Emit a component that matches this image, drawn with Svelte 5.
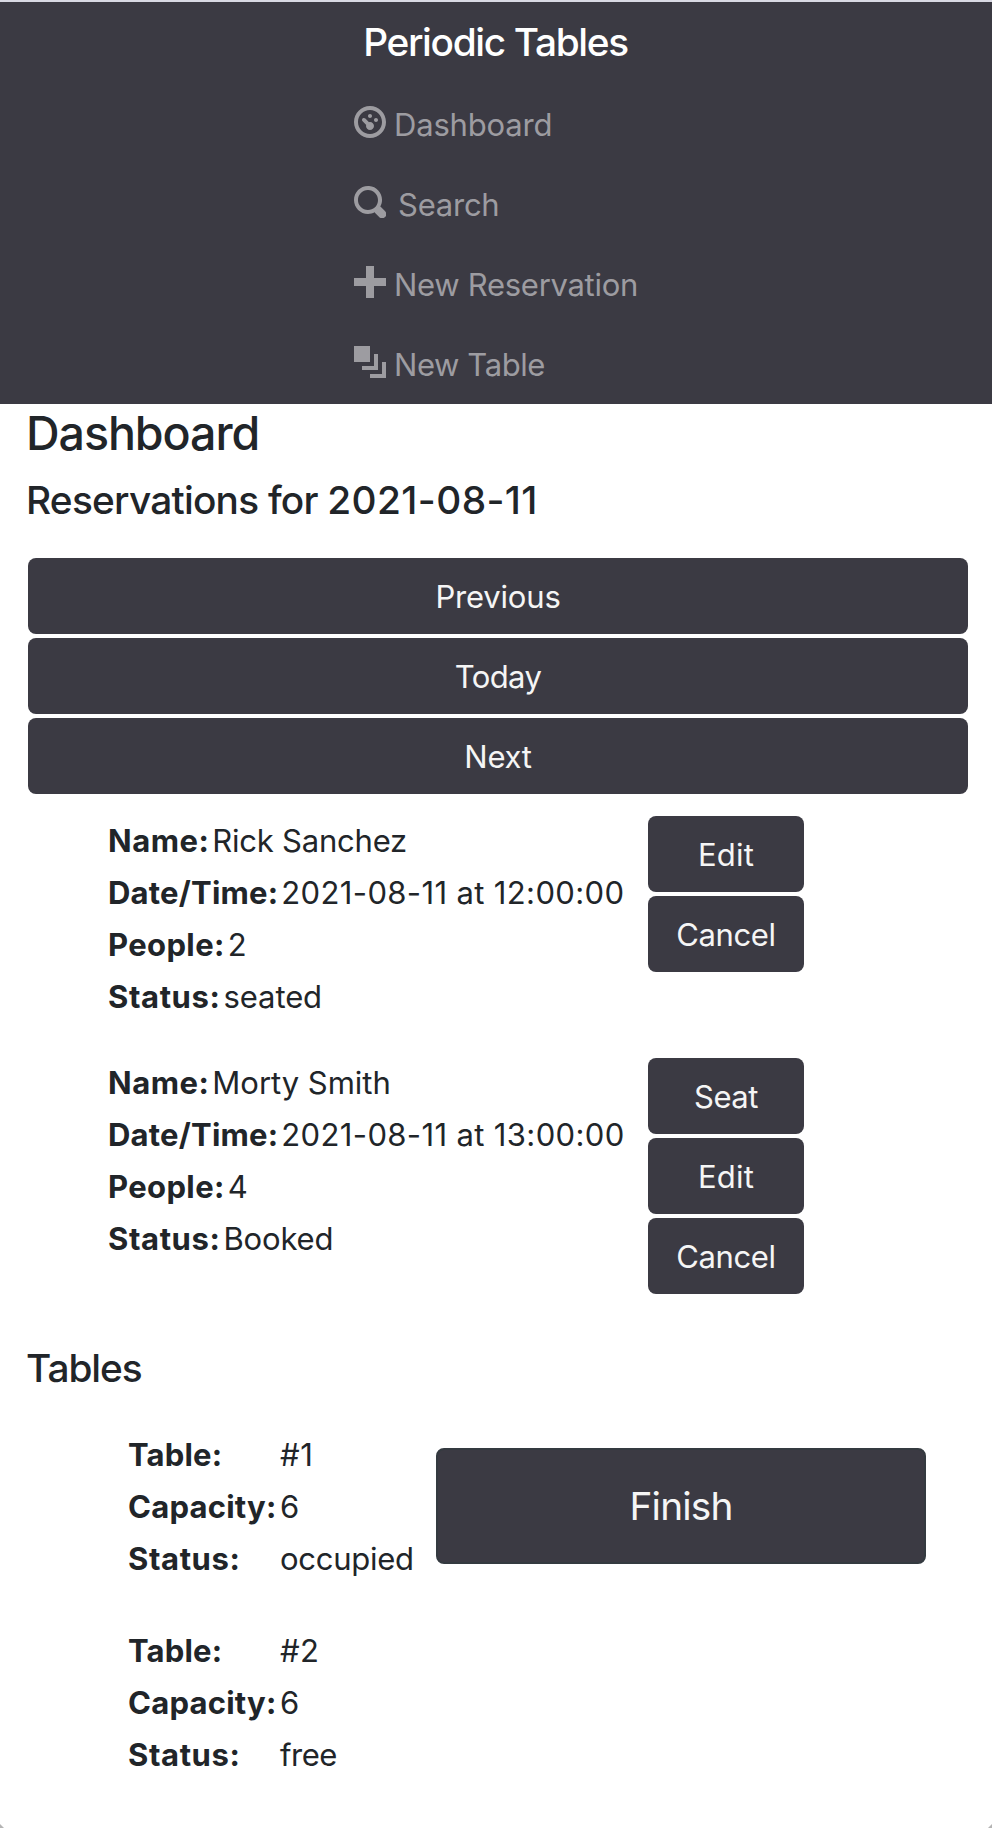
<script>
  const links = [
    { label: 'Dashboard', track: -0.2, icon: 'M4 0c-2.2 0-4 1.8-4 4s1.8 4 4 4 4-1.8 4-4-1.8-4-4-4zm0 1c1.66 0 3 1.34 3 3s-1.34 3-3 3-3-1.34-3-3 1.34-3 3-3zm0 1c-.28 0-.5.22-.5.5s.22.5.5.5.5-.22.5-.5-.22-.5-.5-.5zm-1.66 1a.5.5 0 0 0-.19.84l.91.91c-.02.08-.06.16-.06.25 0 .55.45 1 1 1s1-.45 1-1-.45-1-1-1c-.09 0-.17.04-.25.06l-.91-.91a.5.5 0 0 0-.44-.16.5.5 0 0 0-.06 0zm3.16 0c-.28 0-.5.22-.5.5s.22.5.5.5.5-.22.5-.5-.22-.5-.5-.5z' },
    { label: 'Search', track: -0.25, wide: true, icon: 'M3.5 0c-1.93 0-3.5 1.57-3.5 3.5s1.57 3.5 3.5 3.5c.59 0 1.17-.14 1.66-.41a1 1 0 0 0 .13.13l1 1a1.02 1.02 0 1 0 1.44-1.44l-1-1a1 1 0 0 0-.16-.13c.27-.49.44-1.06.44-1.66 0-1.93-1.55-3.5-3.5-3.5zm0 1c1.39 0 2.5 1.11 2.5 2.5 0 .66-.24 1.27-.66 1.72-.01.01-.02.02-.03.03a1 1 0 0 0-.13.13c-.44.4-1.04.63-1.69.63-1.39 0-2.5-1.11-2.5-2.5s1.11-2.5 2.5-2.5z' },
    { label: 'New Reservation', track: -0.31, icon: 'M3 0v3h-3v2h3v3h2v-3h3v-2h-3v-3h-2z' },
    { label: 'New Table', track: -0.43, icon: 'M0 0v4h4v-4h-4zm5 2v3h-3v1h4v-4h-1zm2 2v3h-3v1h4v-4h-1z' }
  ];

  const days = [
    { label: 'Previous', track: -0.2 },
    { label: 'Today', track: -0.6 },
    { label: 'Next', track: -0.27 }
  ];

  const seat = { label: 'Seat', track: -0.45 };
  const edit = { label: 'Edit', track: 0.2 };
  const cancel = { label: 'Cancel', track: -0.4 };

  const reservations = [
    {
      fields: [
        { label: 'Name:', lt: 0.5, value: 'Rick Sanchez', vt: -0.24 },
        { label: 'Date/Time:', lt: 0.2, value: '2021-08-11 at 12:00:00', vt: 0.35 },
        { label: 'People:', lt: 0.36, value: '2', vt: 0 },
        { label: 'Status:', lt: 0.6, value: 'seated', vt: -0.1 }
      ],
      actions: [edit, cancel]
    },
    {
      fields: [
        { label: 'Name:', lt: 0.5, value: 'Morty Smith', vt: -0.04 },
        { label: 'Date/Time:', lt: 0.2, value: '2021-08-11 at 13:00:00', vt: 0.35 },
        { label: 'People:', lt: 0.36, value: '4', vt: 0 },
        { label: 'Status:', lt: 0.6, value: 'Booked', vt: -0.19 }
      ],
      actions: [seat, edit, cancel]
    }
  ];

  const tables = [
    {
      fields: [
        { label: 'Table:', lt: 0.16, value: '#1', vt: 0.6 },
        { label: 'Capacity:', lt: 0.22, value: '6', vt: 0 },
        { label: 'Status:', lt: 0.6, value: 'occupied', vt: -0.3 }
      ],
      occupied: true
    },
    {
      fields: [
        { label: 'Table:', lt: 0.16, value: '#2', vt: 0.4 },
        { label: 'Capacity:', lt: 0.22, value: '6', vt: 0 },
        { label: 'Status:', lt: 0.6, value: 'free', vt: -0.5 }
      ],
      occupied: false
    }
  ];
</script>

<div class="page">
  <nav class="navbar">
    <div class="brand">Periodic Tables</div>
    <ul class="links">
      {#each links as link}
        <li class="link" class:wide={link.wide}>
          <svg viewBox="0 0 8 8" aria-hidden="true"><path d={link.icon} /></svg>
          <span style="letter-spacing: {link.track}px">{link.label}</span>
        </li>
      {/each}
    </ul>
  </nav>

  <main>
    <h1>Dashboard</h1>
    <h2 class="date">Reservations for <time>2021-08-11</time></h2>

    <div class="days">
      {#each days as day}
        <button class="btn" style="letter-spacing: {day.track}px">{day.label}</button>
      {/each}
    </div>

    <div class="reservations">
      {#each reservations as reservation}
        <section class="reservation">
          <div class="details">
            {#each reservation.fields as field}
              <div class="field">
                <b style="letter-spacing: {field.lt}px">{field.label}</b>
                <span style="letter-spacing: {field.vt}px">{field.value}</span>
              </div>
            {/each}
          </div>
          <div class="actions">
            {#each reservation.actions as action}
              <button class="btn" style="letter-spacing: {action.track}px">{action.label}</button>
            {/each}
          </div>
        </section>
      {/each}
    </div>

    <h2 class="tables-title">Tables</h2>

    <div class="tables">
      {#each tables as table}
        <section class="table">
          <div class="grid">
            {#each table.fields as field}
              <b style="letter-spacing: {field.lt}px">{field.label}</b>
              <span style="letter-spacing: {field.vt}px">{field.value}</span>
            {/each}
          </div>
          {#if table.occupied}
            <button class="btn finish">Finish</button>
          {/if}
        </section>
      {/each}
    </div>
  </main>
  <i class="corner left"></i>
  <i class="corner right"></i>
</div>

<style>
  :global(body) {
    background: #fff;
  }

  .page {
    position: relative;
    box-sizing: border-box;
    height: 1828px;
    overflow: hidden;
    border-top: 2px solid #d9d9e3;
    color: #212529;
    font: 400 31.04px/52px Inter, 'Noto Sans', sans-serif;
    white-space: nowrap;
  }

  .navbar {
    display: flex;
    flex-direction: column;
    align-items: center;
    height: 402px;
    background: #3b3a43;
  }

  .brand {
    height: 82px;
    margin-right: 1px;
    color: #fff;
    font-size: 38.8px;
    font-weight: 450;
    line-height: 80px;
    letter-spacing: -1.33px;
  }

  .links {
    width: 284px;
    margin: 0;
    padding: 0;
    list-style: none;
  }

  .link {
    display: flex;
    gap: 8px;
    height: 80px;
    color: #9d9ca1;
    line-height: 82px;
  }

  .link.wide {
    gap: 12px;
  }

  .link svg {
    flex: none;
    width: 32px;
    height: 32px;
    margin-top: 22px;
    fill: currentColor;
  }

  main {
    padding: 0 24px 0 26px;
  }

  h1,
  h2 {
    margin: 0;
    font-weight: 500;
  }

  h1 {
    font-size: 46.56px;
    line-height: 58px;
    letter-spacing: -1.06px;
  }

  h2 {
    font-size: 38.8px;
    line-height: 48px;
  }

  .date {
    margin-top: 14px;
    letter-spacing: -0.76px;
  }

  .date time {
    letter-spacing: 0.4px;
  }

  .days {
    display: flex;
    flex-direction: column;
    gap: 4px;
    margin: 34px 0 0 2px;
  }

  .btn {
    height: 76px;
    padding: 2px 0 0;
    border: 0;
    border-radius: 8px;
    background: #3b3a43;
    color: #f5f5f5;
    font: inherit;
    line-height: 74px;
    text-align: center;
  }

  .reservations {
    display: flex;
    flex-direction: column;
    gap: 35px;
    margin: 22px 0 0 82px;
  }

  .reservation {
    display: flex;
  }

  .details {
    width: 540px;
    margin-top: -1px;
  }

  .field {
    display: flex;
    gap: 3px;
    height: 52px;
  }

  .actions {
    display: flex;
    flex-direction: column;
    gap: 4px;
    width: 156px;
  }

  .tables-title {
    margin-top: 50px;
    letter-spacing: -1.07px;
  }

  .tables {
    display: flex;
    flex-direction: column;
    gap: 40px;
    margin: 36px 0 0 102px;
  }

  .table {
    display: flex;
    align-items: center;
  }

  .grid {
    display: grid;
    grid-template-columns: 152px 156px;
    margin: 1px 0 -1px;
  }

  .finish {
    box-sizing: border-box;
    width: 490px;
    height: 116px;
    padding: 0;
    border: 2px solid #343a40;
    font-size: 38.8px;
    line-height: 112px;
    letter-spacing: -0.85px;
  }

  .corner {
    position: absolute;
    bottom: 0;
    width: 4px;
    height: 4px;
    background: #b4b4b4;
  }

  .left {
    left: 0;
    clip-path: polygon(0 0, 100% 100%, 0 100%);
  }

  .right {
    right: 0;
    clip-path: polygon(100% 0, 100% 100%, 0 100%);
  }
</style>
